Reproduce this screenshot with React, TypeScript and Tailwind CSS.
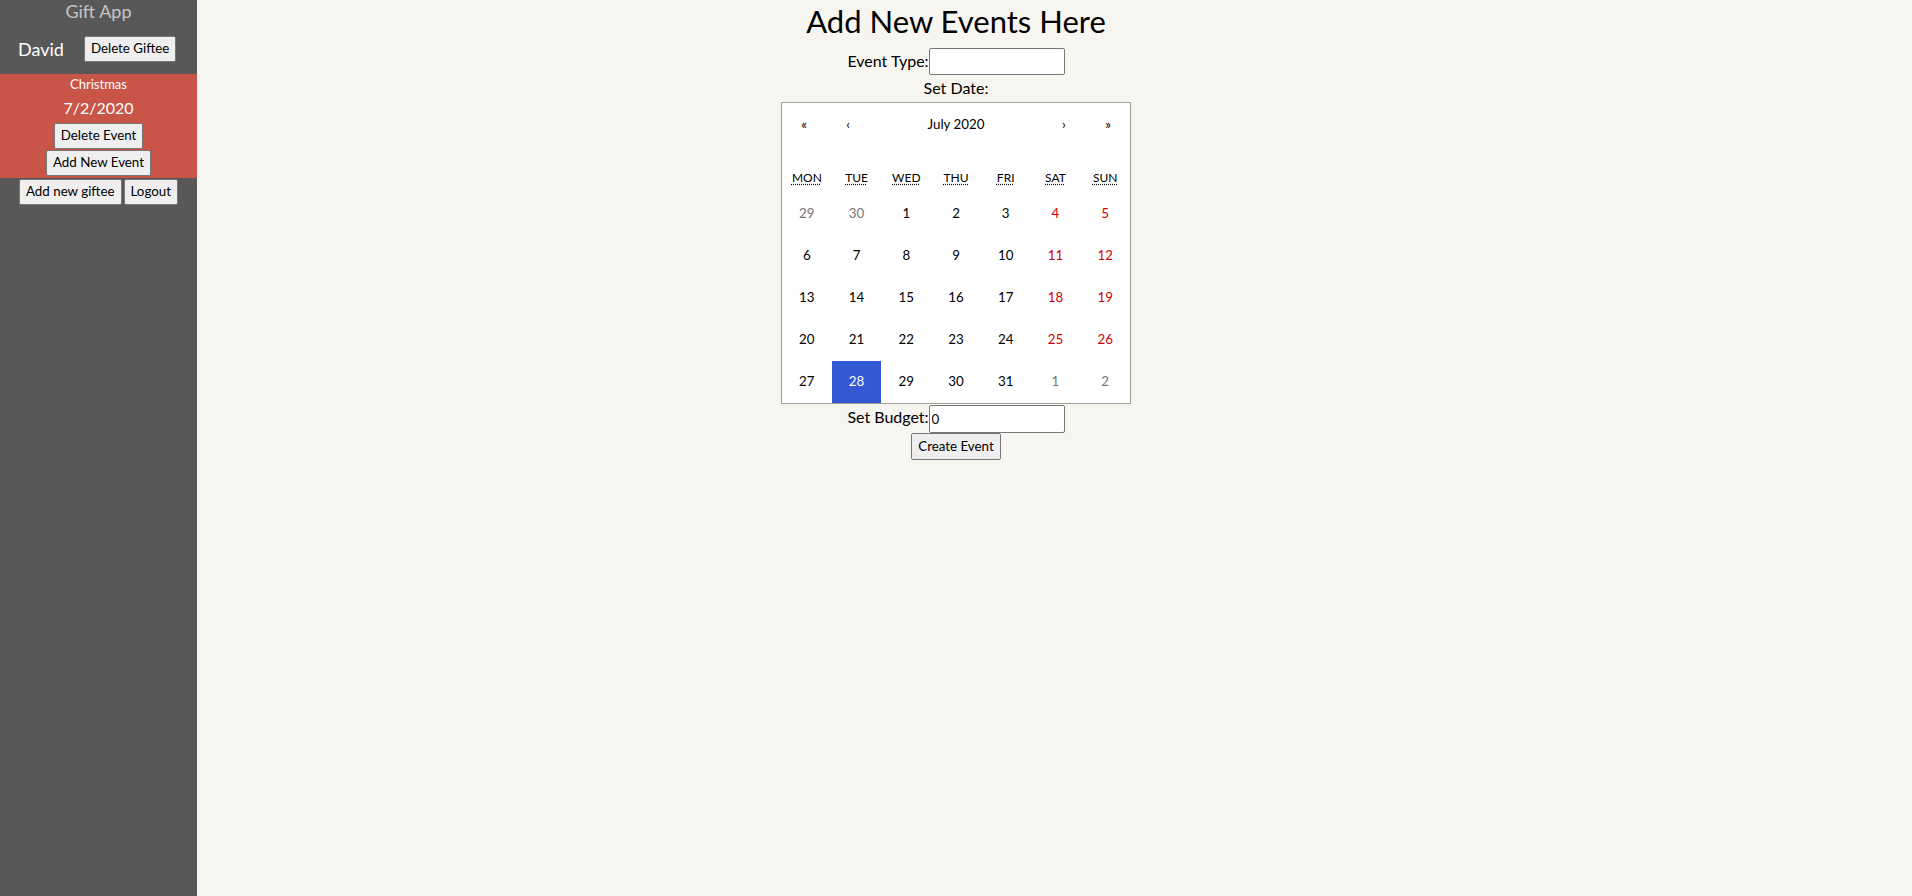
import React from "react";

const btn =
  "bg-[#efefef] border border-[#767676] rounded-[2px] px-[6px] h-[26px] text-[13.33px] leading-none text-black";

const weekdays = ["MON", "TUE", "WED", "THU", "FRI", "SAT", "SUN"];

type Day = { n: number; other?: boolean };

const days: Day[] = [
  { n: 29, other: true },
  { n: 30, other: true },
  ...Array.from({ length: 31 }, (_, i) => ({ n: i + 1 })),
  { n: 1, other: true },
  { n: 2, other: true },
];

const Sidebar = () => (
  <aside className="w-[197px] shrink-0 bg-[#585858] flex flex-col">
    <h1 className="h-[24px] text-center text-[18px] leading-[22px] text-[#c4c4c4]">
      Gift App
    </h1>
    <div className="flex items-center h-[50px] pl-[18px] gap-[20px]">
      <span className="text-[18px] text-white">David</span>
      <button className={btn}>Delete Giftee</button>
    </div>
    <div className="bg-[#c85548] h-[104px] flex flex-col items-center">
      <p className="h-[22px] leading-[20px] text-[13px] text-white">Christmas</p>
      <p className="h-[26px] leading-[24px] text-[16px] text-white">7/2/2020</p>
      <button className={btn + " mt-px"}>Delete Event</button>
      <button className={btn + " mt-px"}>Add New Event</button>
    </div>
    <div className="flex justify-center gap-[2px] pt-px">
      <button className={btn}>Add new giftee</button>
      <button className={btn}>Logout</button>
    </div>
  </aside>
);

const Calendar = () => (
  <div className="w-[350px] bg-white border border-[#a0a096]">
    <div className="flex h-[44px] mb-[16px] items-center text-[13.33px]">
      <button className="w-[44px] h-full">«</button>
      <button className="w-[44px] h-full">‹</button>
      <button className="flex-1 h-full">July 2020</button>
      <button className="w-[44px] h-full">›</button>
      <button className="w-[44px] h-full">»</button>
    </div>
    <div className="grid grid-cols-7 h-[30px] items-center text-center text-[12px]">
      {weekdays.map((w) => (
        <abbr key={w} className="underline decoration-dotted underline-offset-2">
          {w}
        </abbr>
      ))}
    </div>
    <div className="grid grid-cols-7 text-center text-[13.33px]">
      {days.map((d, i) => {
        const col = i % 7;
        const active = !d.other && d.n === 28;
        let color = "text-black";
        if (d.other) color = "text-[#757575]";
        else if (col >= 5) color = "text-[#d10000]";
        if (active) color = "text-white bg-[#3457d5]";
        return (
          <div key={i} className={"h-[42px] flex items-center justify-center " + color}>
            {d.n}
          </div>
        );
      })}
    </div>
  </div>
);

export default function App() {
  return (
    <div className="flex h-[896px] font-['Lato',sans-serif]">
      <Sidebar />
      <main className="flex-1 bg-[#f7f5f0] pr-[197px] flex flex-col items-center">
        <h2 className="h-[43px] pt-[2px] text-[31px] leading-[38px] text-black">
          Add New Events Here
        </h2>
        <div className="flex items-center h-[32px] pt-[5px] text-[16px]">
          <span className="-mt-[2px]">Event Type:</span>
          <input className="w-[136px] h-[27px] bg-white border border-[#767676] rounded-[2px]" />
        </div>
        <p className="h-[27px] leading-[25px] text-[16px]">Set Date:</p>
        <Calendar />
        <div className="flex items-center h-[29px] text-[16px]">
          <span className="-mt-[3px]">Set Budget:</span>
          <input
            defaultValue="0"
            className="w-[136px] h-[28px] bg-white border border-[#767676] rounded-[2px] px-[2px] text-[13.33px]"
          />
        </div>
        <button className={btn + " h-[27px]"}>Create Event</button>
      </main>
    </div>
  );
}
